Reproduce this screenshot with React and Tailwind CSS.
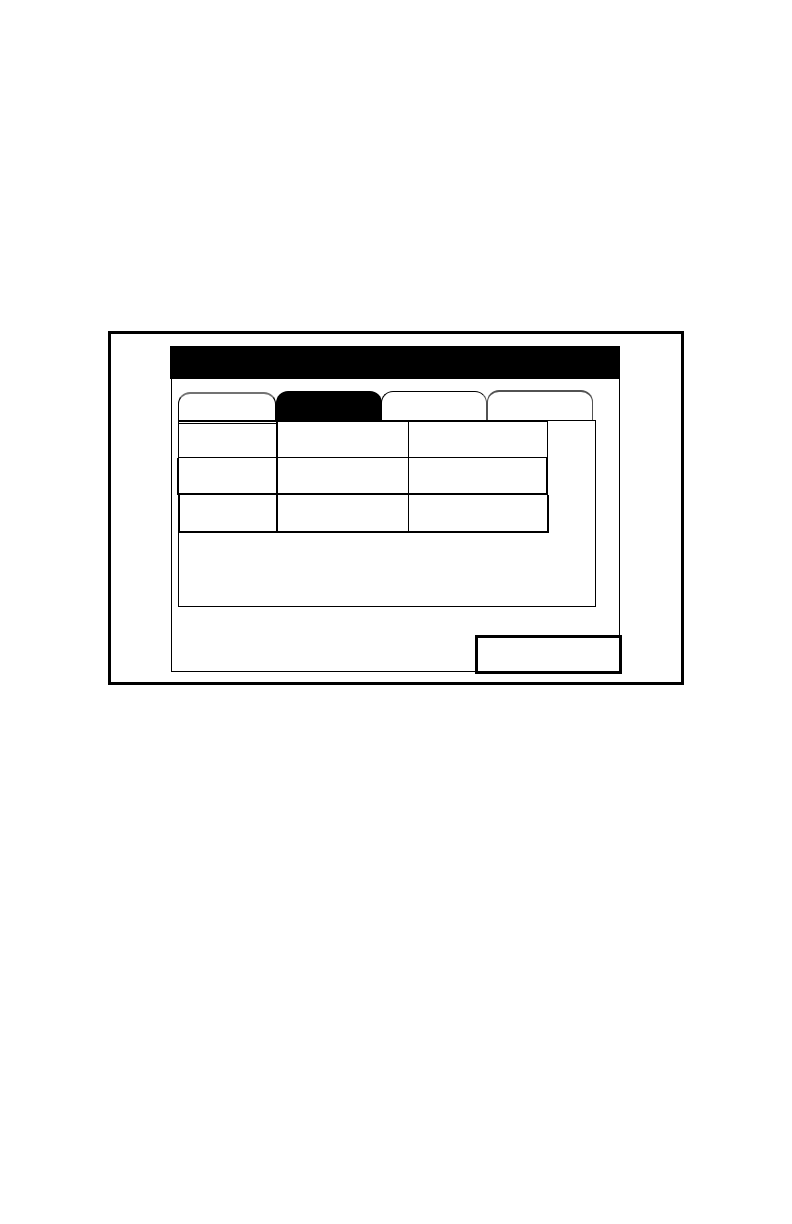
const tabs = [
  { label: "First tab", className: "h-7 w-[98px] border-t-2 border-x border-t-neutral-500 rounded-t-xl" },
  { label: "Second tab", className: "h-[29px] w-[106px] bg-black rounded-t-xl", selected: true },
  { label: "Third tab", className: "h-[29px] w-[106px] -ml-px border-t border-l rounded-t-xl border-r border-r-neutral-600" },
  { label: "Fourth tab", className: "h-[30px] w-[106px] border-t-2 border-x border-neutral-600 rounded-t-xl" },
];

const rows = [
  [
    "h-[38px] ml-px border-l border-t-2 border-r-2 pt-px",
    "h-[38px] border-t-2 border-r border-b",
    "h-[38px] border-t-2 border-r border-b mr-px",
  ],
  [
    "h-[37px] border-l-2 border-r-2 border-b-2",
    "h-[37px] border-r border-b-2",
    "h-[37px] border-r-2 border-b-2 mr-px",
  ],
  [
    "h-[38px] ml-px border-l-2 border-r-2 border-b-2",
    "h-[38px] border-r border-b-2",
    "h-[38px] border-r-2 border-b-2",
  ],
];

function Tabs() {
  return (
    <div role="tablist" className="flex items-end">
      {tabs.map((tab) => (
        <button
          key={tab.label}
          role="tab"
          aria-label={tab.label}
          aria-selected={!!tab.selected}
          className={`border-black ${tab.className}`}
        />
      ))}
    </div>
  );
}

function Grid() {
  return (
    <table className="-mt-px -ml-0.5 w-[372px] table-fixed border-separate border-spacing-0">
      <colgroup>
        <col className="w-[101px]" />
        <col className="w-[131px]" />
        <col className="w-[140px]" />
      </colgroup>
      <tbody>
        {rows.map((cells, i) => (
          <tr key={i}>
            {cells.map((cell, j) => (
              <td key={j} className="p-0">
                <div className={`border-black ${cell}`}>
                  {i === 0 && j === 0 && <div className="h-[35px] border-t border-b border-black" />}
                </div>
              </td>
            ))}
          </tr>
        ))}
      </tbody>
    </table>
  );
}

export default function App() {
  return (
    <main className="min-h-screen bg-white px-[108px] pt-[331px] font-['Liberation_Sans',sans-serif]">
      <div className="border-3 border-black pt-3 pb-2.5 pl-15 pr-[61px]">
        <section className="flex flex-col border border-black">
          <header className="-ml-0.5 -mr-px -mt-px h-[33px] bg-black" />
          <div className="pl-1.5 pr-[23px] pt-[11px]">
            <Tabs />
            <div role="tabpanel" className="h-[187px] border border-black">
              <Grid />
            </div>
          </div>
          <button
            aria-label="Close"
            className="mt-7 -mr-[3px] -mb-[3px] h-[39px] w-[147px] self-end border-3 border-black bg-white"
          />
        </section>
      </div>
    </main>
  );
}
